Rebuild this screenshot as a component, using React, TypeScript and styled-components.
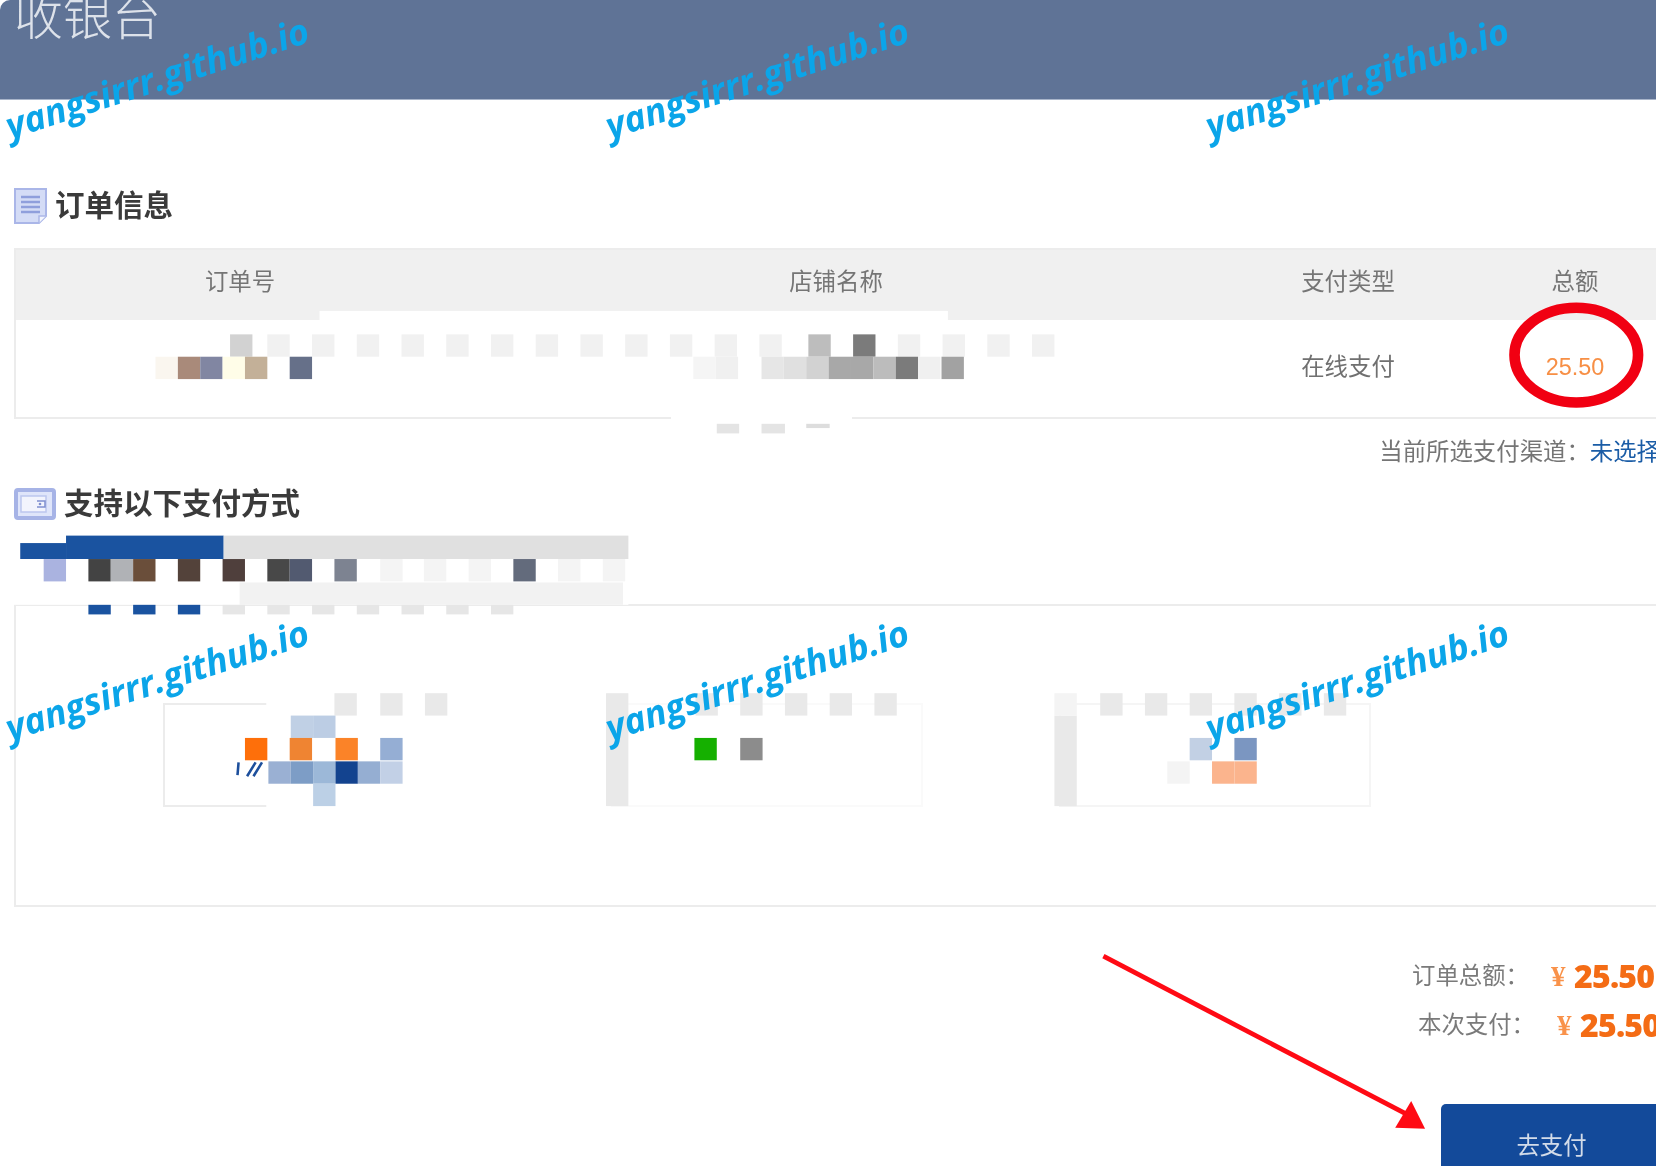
import React from "react";
import styled, { createGlobalStyle } from "styled-components";

const Global = createGlobalStyle`
  html, body { margin: 0; padding: 0; background: #fff; }
  body { font-family: "Liberation Sans", "Noto Sans CJK SC", sans-serif; overflow: hidden; }
`;

const CJK = `"Liberation Sans", "Noto Sans CJK SC", sans-serif`;

const Stage = styled.div`
  position: relative;
  width: 1670px;
  height: 1166px;
  overflow: hidden;
  background: #fff;
`;
const Frame = styled.main`
  width: 1656px;
  height: 1166px;
  overflow: hidden;
  border-top-left-radius: 10px;
`;
const Soft = styled.div`
  width: 1662px;
  height: 1176px;
  box-sizing: border-box;
  padding-right: 6px;
  overflow: hidden;
  display: flex;
  flex-direction: column;
  filter: blur(0.7px);
`;
const Header = styled.header`
  height: 100px;
  flex: none;
  margin-right: -6px;
  background: #5f7396;
  border-bottom: 1px solid #a9b5ca;
  box-sizing: border-box;
  overflow: hidden;
  padding-left: 14px;
`;
const BrandTitle = styled.h1`
  margin: -7px 0 0;
  font: 300 49px/50px ${CJK};
  color: #dde2ea;
`;
const SectionHead = styled.div<{ $top: number }>`
  margin: ${(p) => p.$top}px 0 0 14px;
  height: 36px;
  display: flex;
  align-items: center;
  flex: none;
`;
const SectionTitle = styled.h2<{ $gap: number }>`
  margin: 0 0 0 ${(p) => p.$gap}px;
  font: 700 29.5px/36px ${CJK};
  color: #3a3a3a;
`;
const OrderTable = styled.section`
  margin: 24px 0 0 14px;
  width: 1660px;
  flex: none;
  border: 2px solid #ececec;
  box-sizing: border-box;
  height: 171px;
  display: grid;
  grid-template-columns: 448px 744px 280px 174px;
  grid-template-rows: 70px 1fr;
`;
const HeadCell = styled.div`
  background: #f0f0f0;
  display: flex;
  align-items: center;
  justify-content: center;
  font: 400 23.4px/30px ${CJK};
  color: #757575;
  padding-bottom: 6px;
`;
const BodyCell = styled.div<{ $accent?: boolean }>`
  display: flex;
  align-items: center;
  justify-content: center;
  font: 400 23.4px/30px ${CJK};
  color: ${(p) => (p.$accent ? "#f78f45" : "#707070")};
  padding-bottom: 3px;
`;
const ChannelRow = styled.div`
  margin: 20px -4px 0 0;
  height: 26px;
  flex: none;
  display: flex;
  justify-content: flex-end;
  font: 400 23.4px/26px ${CJK};
  color: #757575;
  white-space: nowrap;
`;
const ChannelValue = styled.span`
  color: #1a5ca6;
`;
const PayBox = styled.section`
  margin: 82px 0 0 14px;
  width: 1660px;
  height: 303px;
  flex: none;
  box-sizing: border-box;
  border: 2px solid #ececec;
  padding: 97px 0 0 147px;
  display: flex;
  gap: 136px;
  align-items: flex-start;
`;
const PayCard = styled.div<{ $tone: string }>`
  width: 312px;
  height: 104px;
  box-sizing: border-box;
  border: 2px solid ${(p) => p.$tone};
`;
const Summary = styled.section`
  margin-top: 44px;
  display: flex;
  flex-direction: column;
  align-items: flex-end;
  flex: none;
`;
const SummaryRow = styled.div<{ $shift: number }>`
  height: 49px;
  display: flex;
  align-items: center;
  margin-right: ${(p) => p.$shift}px;
  white-space: nowrap;
`;
const SummaryLabel = styled.span`
  font: 400 23.4px/30px "Liberation Serif", "Noto Sans CJK SC", serif;
  color: #7a7a7a;
  width: 139px;
`;
const Yen = styled.span`
  font: 700 29px/30px "Liberation Serif", "Noto Sans CJK SC", serif;
  color: #f9924a;
  width: 23px;
`;
const Amount = styled.strong`
  font: 800 32px/36px "Open Sans", sans-serif;
  color: #f46c15;
  letter-spacing: -0.8px;
  width: 82px;
`;
const PayButton = styled.button`
  margin: 55px -6px 0 auto;
  width: 221px;
  height: 90px;
  flex: none;
  border: 0;
  border-radius: 5px;
  background: #134a9a;
  color: #d3dce9;
  font: 400 23.4px/30px ${CJK};
  padding: 0 0 6px;
  display: block;
  text-align: center;
`;
const Overlay = styled.svg`
  position: absolute;
  inset: 0;
  width: 1670px;
  height: 1166px;
  pointer-events: none;
  filter: blur(0.7px);
`;
const WatermarkLayer = styled.div`
  position: absolute;
  inset: 0;
  pointer-events: none;
  filter: blur(0.3px);
`;
const Watermark = styled.span<{ $x: number; $y: number }>`
  position: absolute;
  left: ${(p) => p.$x}px;
  top: ${(p) => p.$y}px;
  font: italic 700 36px/36px "Open Sans", sans-serif;
  color: #0ba5e9;
  white-space: nowrap;
  transform-origin: left bottom;
  transform: rotate(-18deg);
`;

type Cell = [number, number, string];
const G = "#f1f1f1";
const cells: Cell[] = [
  [216, 314, "#d2d2d2"],
  ...[251, 293, 335, 377, 419, 461, 503, 545, 587, 629, 671, 713, 843, 885, 927, 969].map((x) => [x, 314, G] as Cell),
  [759, 314, "#bdbdbd"],
  [801, 314, "#7b7b7b"],
  [146, 335, "#faf6ef"],
  [167, 335, "#a98a7a"],
  [188, 335, "#8186a2"],
  [209, 335, "#fffde8"],
  [230, 335, "#c3b098"],
  [272, 335, "#667089"],
  [651, 335, "#f5f5f5"],
  [672, 335, "#f0f0f0"],
  [715, 335, "#e6e6e6"],
  [736, 335, "#e0e0e0"],
  [757, 335, "#d2d2d2"],
  [778, 335, "#a8a8a8"],
  [799, 335, "#a8a8a8"],
  [820, 335, "#bcbcbc"],
  [841, 335, "#7b7b7b"],
  [862, 335, "#f0f0f0"],
  [884, 335, "#a2a2a2"],
  [41, 525, "#aab3e0"],
  [83, 525, "#434343"],
  [104, 525, "#b0b2b6"],
  [125, 525, "#6a4e3a"],
  [167, 525, "#53423a"],
  [209, 525, "#4f3f3c"],
  [251, 525, "#484848"],
  [272, 525, "#525a70"],
  [314, 525, "#7d8391"],
  [482, 525, "#636b7c"],
  ...[357, 398, 440, 524, 566].map((x) => [x, 525, "#f4f4f4"] as Cell),
  [314, 651, "#e9e9e9"],
  [357, 651, "#e9e9e9"],
  [399, 651, "#e9e9e9"],
  [273, 672, "#c0d0e5"],
  [294, 672, "#bccde4"],
  [230, 693, "#fe6f0a"],
  [272, 693, "#ef8432"],
  [315, 693, "#fb8328"],
  [357, 693, "#95aed4"],
  [252, 715, "#9ab0d3"],
  [273, 715, "#7d9dc6"],
  [294, 715, "#9cb8d8"],
  [315, 715, "#13438f"],
  [336, 715, "#95aed2"],
  [357, 715, "#c2d0e6"],
  [294, 736, "#bcd0e6"],
  ...[653, 695, 737, 779, 821].map((x) => [x, 651, "#e9e9e9"] as Cell),
  [652, 693, "#15b000"],
  [695, 693, "#8c8c8c"],
  ...[1033, 1075, 1117, 1159, 1201, 1243].map((x) => [x, 651, "#e9e9e9"] as Cell),
  [1117, 693, "#c2d0e4"],
  [1159, 693, "#7b96c1"],
  [1096, 715, "#f4f4f4"],
  [1138, 715, "#fbb48d"],
  [1159, 715, "#fbb48d"],
];

const bars: [number, number, number, number, string][] = [
  [300, 292, 590, 9, "#ffffff"],
  [630, 390, 170, 18, "#ffffff"],
  [673, 398, 21, 9, "#e4e4e4"],
  [715, 398, 22, 9, "#e4e4e4"],
  [757, 398, 22, 4, "#dddddd"],
  [19, 510, 43, 15, "#1a53a0"],
  [62, 503, 148, 22, "#1a53a0"],
  [210, 503, 380, 22, "#e0e0e0"],
  [0, 525, 590, 43, "#ffffff"],
  [225, 547, 360, 21, "#f2f2f2"],
  [83, 568, 21, 9, "#1a53a0"],
  [125, 568, 21, 9, "#1a53a0"],
  [167, 568, 21, 9, "#1a53a0"],
  ...[209, 251, 293, 335, 377, 419, 461].map(
    (x) => [x, 568, 21, 9, "#e6e6e6"] as [number, number, number, number, string]
  ),
  [250, 655, 210, 105, "#ffffff"],
  [569, 651, 21, 106, "#e9e9e9"],
  [990, 672, 21, 85, "#e9e9e9"],
  [990, 651, 21, 21, "#f4f4f4"],
];

const watermarkPos = [
  [12, 108],
  [612, 108],
  [1212, 108],
  [12, 710],
  [612, 710],
  [1212, 710],
];

function DocIcon() {
  return (
    <svg width="33" height="36" viewBox="0 0 33 36" fill="none">
      <path d="M1 1h31v27l-7 7H1z" fill="#d4dcf6" stroke="#aab6e8" strokeWidth="2" />
      <path d="M25 35v-7h7" fill="#f4f6fd" stroke="#aab6e8" strokeWidth="1.5" />
      <path d="M7 9h19M7 14h19M7 19h19M7 24h19" stroke="#8f9fdc" strokeWidth="2.4" />
    </svg>
  );
}

function WalletIcon() {
  return (
    <svg width="42" height="32" viewBox="0 0 42 32" fill="none">
      <rect x="2" y="2" width="38" height="28" rx="2" fill="#dfe5fa" stroke="#a6b3e6" strokeWidth="4" />
      <rect x="7" y="8" width="25" height="16" fill="#f2f4fd" stroke="#bcc6ee" strokeWidth="1.5" />
      <path d="M23 13h8v6h-8" fill="none" stroke="#7f8fcf" strokeWidth="1.5" />
      <circle cx="26" cy="16" r="1.3" fill="#7f8fcf" />
    </svg>
  );
}

export default function App() {
  return (
    <Stage>
      <Global />
      <Frame>
        <Soft>
          <Header>
            <BrandTitle>收银台</BrandTitle>
          </Header>
          <SectionHead $top={88}>
            <DocIcon />
            <SectionTitle $gap={8}>订单信息</SectionTitle>
          </SectionHead>
          <OrderTable>
            <HeadCell>订单号</HeadCell>
            <HeadCell>店铺名称</HeadCell>
            <HeadCell>支付类型</HeadCell>
            <HeadCell>总额</HeadCell>
            <BodyCell />
            <BodyCell />
            <BodyCell>在线支付</BodyCell>
            <BodyCell $accent>25.50</BodyCell>
          </OrderTable>
          <ChannelRow>
            当前所选支付渠道：<ChannelValue>未选择</ChannelValue>
          </ChannelRow>
          <SectionHead $top={21}>
            <WalletIcon />
            <SectionTitle $gap={8}>支持以下支付方式</SectionTitle>
          </SectionHead>
          <PayBox>
            <PayCard $tone="#ececec" />
            <PayCard $tone="#fafafa" />
            <PayCard $tone="#f5f5f5" />
          </PayBox>
          <Summary>
            <SummaryRow $shift={0}>
              <SummaryLabel>订单总额：</SummaryLabel>
              <Yen>¥</Yen>
              <Amount>25.50</Amount>
            </SummaryRow>
            <SummaryRow $shift={-6}>
              <SummaryLabel>本次支付：</SummaryLabel>
              <Yen>¥</Yen>
              <Amount>25.50</Amount>
            </SummaryRow>
          </Summary>
          <PayButton>去支付</PayButton>
        </Soft>
      </Frame>
      <Overlay viewBox="0 0 1568 1095" preserveAspectRatio="none">
        {bars.map(([x, y, w, h, c], i) => (
          <rect key={i} x={x} y={y} width={w} height={h} fill={c} />
        ))}
        {cells.map(([x, y, c], i) => (
          <rect key={i} x={x} y={y} width={21} height={21} fill={c} />
        ))}
        <path d="M224 716l-1 12M240 716l-8 13M246 716l-8 13" stroke="#1d4f9c" strokeWidth="2.4" fill="none" />
        <ellipse cx="1480" cy="333.500" rx="58" ry="44.500" fill="none" stroke="#f10012" strokeWidth="10" />
        <path d="M1036 898L1322 1047" stroke="#ff0a14" strokeWidth="4.500" fill="none" />
        <path d="M1338 1060L1325 1034L1310 1059Z" fill="#ff0a14" />
      </Overlay>
      <WatermarkLayer>
        {watermarkPos.map(([x, y], i) => (
          <Watermark key={i} $x={x} $y={y}>
            yangsirrr.github.io
          </Watermark>
        ))}
      </WatermarkLayer>
    </Stage>
  );
}
